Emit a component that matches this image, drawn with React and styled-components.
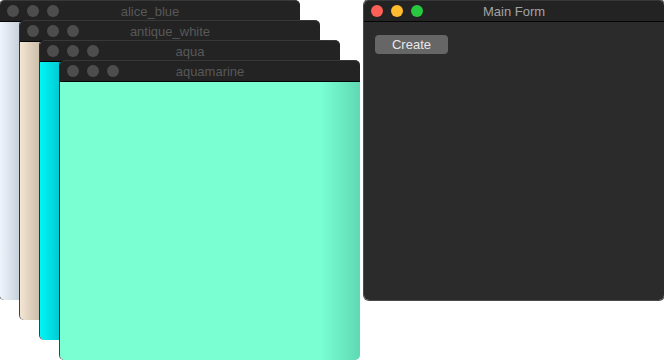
import styled, { createGlobalStyle } from 'styled-components';

const GlobalStyle = createGlobalStyle`
  body {
    margin: 0;
    background: #ffffff;
    font-family: "Liberation Sans", Arial, sans-serif;
  }
`;

// the desktop is a free canvas: windows are placed at their own coordinates
const Desktop = styled.div`
  position: relative;
  width: 664px;
  height: 360px;
  overflow: hidden;
  background: #ffffff;
`;

const Window = styled.div`
  position: absolute;
  left: ${p => p.$x}px;
  top: ${p => p.$y}px;
  width: ${p => p.$w}px;
  height: 300px;
  display: flex;
  flex-direction: column;
  border-radius: 5px;
  box-shadow: ${p => (p.$active ? '0 0 0 1px #4a4a4a' : '-1px 0 0 rgba(0,0,0,0.75)')};
`;

const TitleBar = styled.div`
  position: relative;
  height: 21px;
  flex-shrink: 0;
  display: flex;
  align-items: center;
  gap: 8px;
  padding-left: 7px;
  background: #232323;
  border-top: 1px solid #383838;
  border-bottom: 1px solid #050505;
  border-radius: 5px 5px 0 0;
  box-sizing: border-box;
  height: 22px;
`;

const Light = styled.span`
  width: 12px;
  height: 12px;
  border-radius: 50%;
  background: ${p => p.$color};
`;

const Title = styled.div`
  position: absolute;
  left: 0;
  right: 0;
  top: 0;
  bottom: 0;
  display: flex;
  align-items: center;
  justify-content: center;
  font-size: 13px;
  color: ${p => (p.$active ? '#a3a3a3' : '#585858')};
  pointer-events: none;
`;

const Body = styled.div`
  flex: 1;
  background: ${p => p.$bg};
  border-radius: 0 0 5px 5px;
  padding: 13px 11px;
`;

const Button = styled.button`
  width: 73px;
  height: 19px;
  padding: 0;
  border: none;
  border-radius: 4px;
  background: #666666;
  color: #e8e8e8;
  font-family: "Liberation Sans", Arial, sans-serif;
  font-size: 13px;
  line-height: 19px;
  text-align: center;
`;

const strip = (a, b, base) =>
  `linear-gradient(to right, ${a} 0px, ${b} 20px, ${base} 21px)`;

const stack = [
  { name: 'alice_blue', x: 0, y: 0, bg: strip('#eef4fc', '#c6cfda', '#f0f8ff') },
  { name: 'antique_white', x: 20, y: 20, bg: strip('#f3e6d3', '#cbbca8', '#faebd7') },
  { name: 'aqua', x: 40, y: 40, bg: strip('#00f6f6', '#00c9d2', '#00ffff') },
  {
    name: 'aquamarine',
    x: 60,
    y: 60,
    bg: 'linear-gradient(to right, #7affd3 0px, #7affd3 calc(100% - 40px), #5fd9b3 100%)',
  },
];

const Lights = ({ active }) => (
  <>
    <Light $color={active ? '#fe5f57' : '#4d4d4d'} />
    <Light $color={active ? '#febc2e' : '#4d4d4d'} />
    <Light $color={active ? '#28c840' : '#4d4d4d'} />
  </>
);

const App = () => {
  return (
    <>
      <GlobalStyle />
      <Desktop>
        {stack.map(w => (
          <Window key={w.name} $x={w.x} $y={w.y} $w={300}>
            <TitleBar>
              <Lights />
              <Title>{w.name}</Title>
            </TitleBar>
            <Body $bg={w.bg} />
          </Window>
        ))}
        <Window $x={364} $y={0} $w={300} $active>
          <TitleBar>
            <Lights active />
            <Title $active>Main Form</Title>
          </TitleBar>
          <Body $bg="#2b2b2b">
            <Button>Create</Button>
          </Body>
        </Window>
      </Desktop>
    </>
  );
};

export default App;
